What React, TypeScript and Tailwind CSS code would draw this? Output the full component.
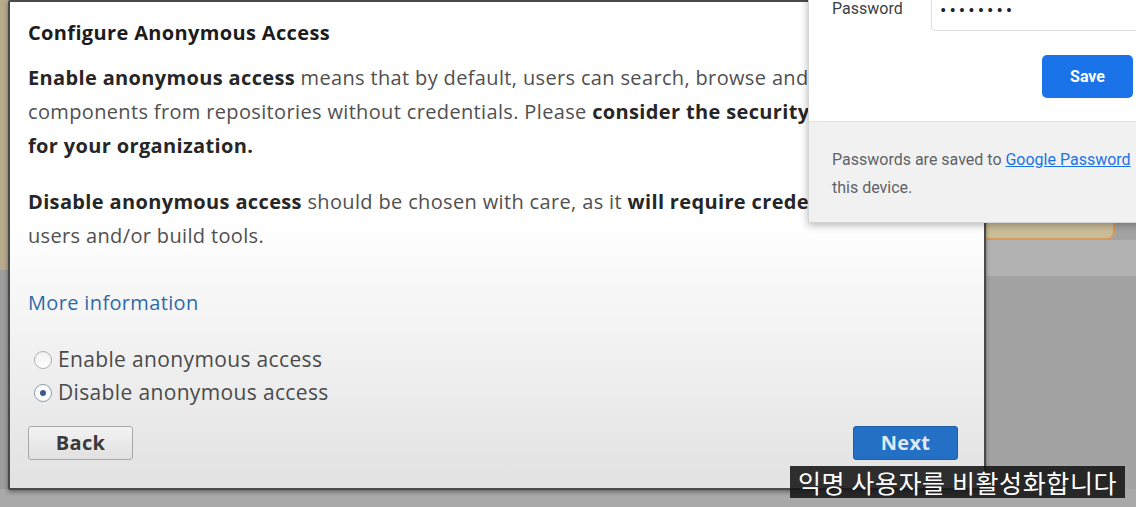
import React from "react";

const F = { fontFamily: "'Open Sans', Lato, sans-serif" } as const;

export default function App() {
  return (
    <div className="relative w-[1136px] h-[507px] overflow-hidden bg-[#a3a3a3]" style={F}>
      {/* background page */}
      <div className="absolute left-0 top-0 w-[12px] h-[270px] bg-[#b7ab8c]" />
      <div className="absolute left-0 top-[270px] w-[12px] h-[237px] bg-[#9d9d9d]" />
      <div className="absolute left-[980px] top-[180px] w-[135px] h-[60px] rounded-b-[8px] bg-[#cbbd98] border-b-2 border-r-2 border-[#d69a5a]" />
      <div className="absolute left-[985px] top-[240px] w-[151px] h-[36px] bg-[#b2b2b2]" />
      <div className="absolute left-0 top-[489px] w-[1136px] h-[18px] bg-[#a9a9a9]" />

      {/* dialog */}
      <div className="absolute left-[8px] top-0 w-[978px] h-[490px] border-2 border-[#4a4a4a] rounded-[2px] bg-gradient-to-b from-white from-45% to-[#e2e2e2] pt-[14px] pl-[18px] pr-[26px] flex flex-col shadow-[0_2px_4px_rgba(0,0,0,0.4)] tracking-[0.35px]">
        <div className="text-[20px] leading-[34px] font-bold text-[#1c1c1c]">Configure Anonymous Access</div>
        <div className="mt-[11px] text-[20px] leading-[34px] text-[#505050] whitespace-nowrap">
          <b className="text-[#262626]">Enable anonymous access</b> means that by default, users can search, browse and download
          <br />
          components from repositories without credentials. Please <b className="text-[#262626]">consider the security implications</b>
          <br />
          <b className="text-[#262626]">for your organization.</b>
        </div>
        <div className="mt-[22px] text-[20px] leading-[34px] text-[#505050] whitespace-nowrap">
          <b className="text-[#262626]">Disable anonymous access</b> should be chosen with care, as it <b className="text-[#262626]">will require credentials for all</b>
          <br />
          users and/or build tools.
        </div>
        <div className="mt-[33px] text-[20px] leading-[34px] text-[#2f6aa8]">More information</div>
        <div className="mt-[23px] flex flex-col">
          <div className="h-[33px] flex items-center gap-[6px] pl-[6px]">
            <span className="w-[18px] h-[18px] rounded-full border border-[#b0b0b0] bg-gradient-to-b from-[#f0f0f0] to-white" />
            <span className="text-[21px] text-[#4a4a4a]">Enable anonymous access</span>
          </div>
          <div className="h-[33px] flex items-center gap-[6px] pl-[6px]">
            <span className="w-[18px] h-[18px] rounded-full border border-[#8a9aab] bg-white flex items-center justify-center">
              <span className="w-[6px] h-[6px] rounded-full bg-[#3a5f8c]" />
            </span>
            <span className="text-[21px] text-[#4a4a4a]">Disable anonymous access</span>
          </div>
        </div>
        <div className="mt-[17px] flex justify-between items-center">
          <button className="w-[105px] h-[34px] rounded-[3px] border border-[#a8a8a8] bg-gradient-to-b from-[#f3f3f3] to-[#e0e0e0] text-[20px] font-bold text-[#3a3a3a]">Back</button>
          <button className="w-[105px] h-[34px] rounded-[3px] border border-[#1e5fa8] bg-[#2470c4] text-[20px] font-bold text-[#dfe8f3]">Next</button>
        </div>
      </div>

      {/* chrome password popup */}
      <div className="absolute left-[808px] top-[-20px] w-[340px] h-[243px] bg-white border border-[#d6d6d6] shadow-[0_2px_8px_rgba(0,0,0,0.3)] flex flex-col" style={{ fontFamily: "Roboto, 'Open Sans', sans-serif" }}>
        <div className="h-[140px] pl-[23px] flex flex-col">
          <div className="flex items-center h-[50px]">
            <span className="w-[99px] text-[16px] text-[#3c4043] mt-[6px]">Password</span>
            <div className="flex-1 h-[50px] border border-[#dadce0] rounded-[4px] flex items-end pb-[5px] pl-[8px] text-[19px] tracking-[3px] text-[#202124]">••••••••</div>
          </div>
          <div className="flex justify-end pr-[14px] mt-[24px]">
            <div className="w-[91px] h-[43px] rounded-[5px] bg-[#1a73e8] text-white text-[16px] font-bold flex items-center justify-center">Save</div>
          </div>
        </div>
        <div className="flex-1 bg-[#f1f1f1] border-t border-[#e2e2e2] pl-[23px] pt-[24px] text-[16px] leading-[28px] text-[#5f6368] whitespace-nowrap">
          Passwords are saved to <span className="text-[#1a73e8] underline">Google Password</span>
          <br />
          this device.
        </div>
      </div>

      {/* subtitle */}
      <div className="absolute left-[790px] top-[466px] w-[335px] h-[32px] bg-[rgba(20,20,20,0.88)] flex items-center justify-center text-[25px] tracking-[0.6px] leading-none text-white" style={{ fontFamily: "'Noto Sans CJK KR', sans-serif" }}>
        익명 사용자를 비활성화합니다
      </div>
    </div>
  );
}
